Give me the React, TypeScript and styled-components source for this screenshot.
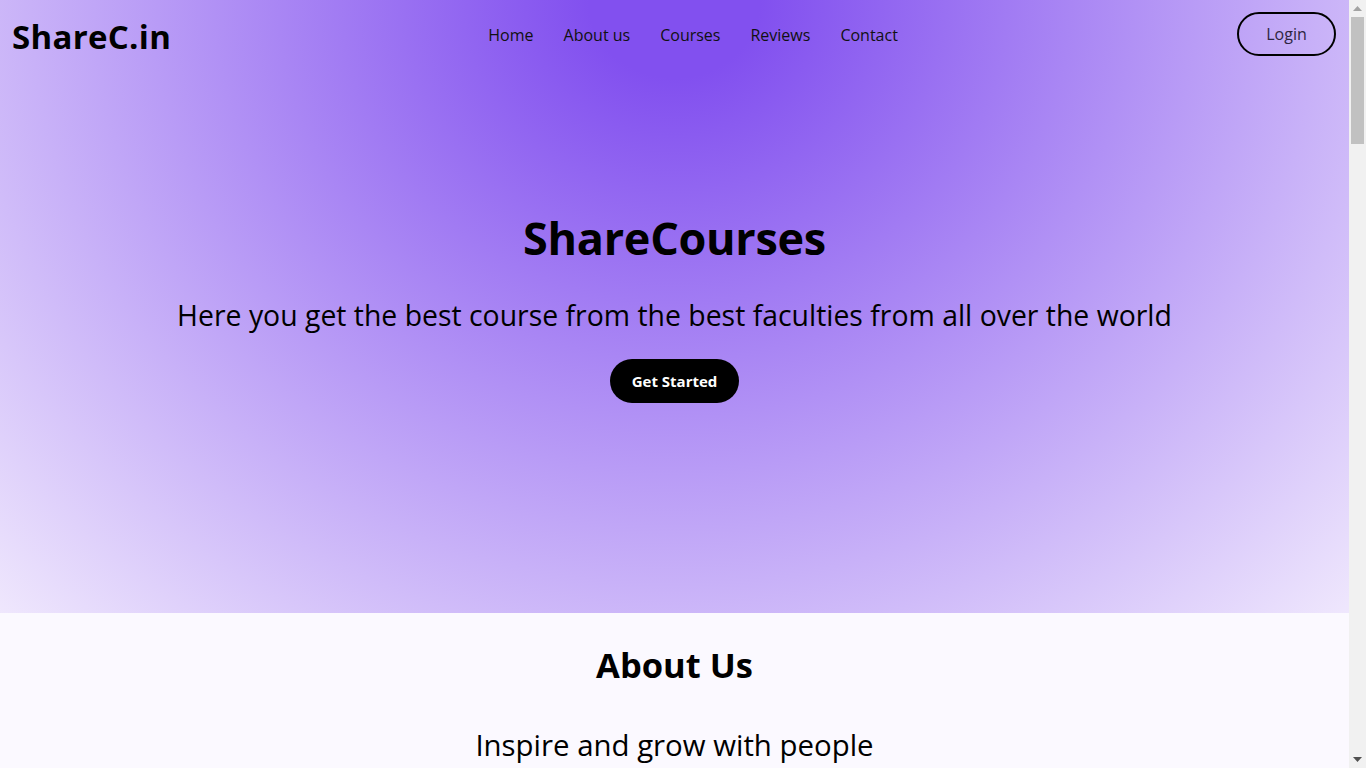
import React from "react";
import styled, { createGlobalStyle } from "styled-components";

const GlobalStyle = createGlobalStyle`
  * { box-sizing: border-box; }
  html, body { margin: 0; padding: 0; }
  html::-webkit-scrollbar { display: none; }
  body {
    font-family: "Segoe UI", "Open Sans", "Noto Sans", sans-serif;
    color: #000;
    background: #fbf9ff;
    padding-right: 17px;
  }
`;

/* Fake classic scrollbar, fixed over the right edge */
const ScrollTrack = styled.div`
  position: fixed;
  top: 0;
  right: 0;
  width: 17px;
  height: 100vh;
  background: #f1f1f1;
  display: flex;
  flex-direction: column;
  z-index: 10;
`;

const ScrollButton = styled.div`
  height: 17px;
  display: flex;
  align-items: center;
  justify-content: center;
`;

const ScrollThumbArea = styled.div`
  flex: 1;
  padding: 0 2px;
`;

const ScrollThumb = styled.div`
  height: 127px;
  background: #c1c1c1;
`;

const Hero = styled.header`
  height: 613px;
  display: flex;
  flex-direction: column;
  background: radial-gradient(ellipse at top, #8250ef 9%, #efe7fd 100%);
`;

const NavBar = styled.nav`
  height: 70px;
  padding: 0 13px 0 12px;
  display: flex;
  align-items: center;
  justify-content: space-between;
`;

const Logo = styled.div`
  font-size: 33px;
  font-weight: 700;
  letter-spacing: 0.3px;
  line-height: 1;
  margin-top: 2px;
`;

const Links = styled.ul`
  list-style: none;
  margin: 0 22px 0 0;
  padding: 0;
  display: flex;
  gap: 30px;
`;

const LinkItem = styled.li`
  font-size: 16px;
  color: #111;
  cursor: pointer;
`;

const LoginButton = styled.button`
  width: 99px;
  height: 44px;
  border: 2px solid #000;
  border-radius: 22px;
  background: transparent;
  font-family: inherit;
  font-size: 16px;
  color: #2e2540;
  margin-top: -2px;
  cursor: pointer;
`;

const HeroBody = styled.div`
  flex: 1;
  display: flex;
  flex-direction: column;
  align-items: center;
  padding-top: 136px;
`;

const Title = styled.h1`
  margin: 0;
  font-size: 45px;
  font-weight: 700;
  line-height: 64px;
  letter-spacing: -0.3px;
`;

const Subtitle = styled.p`
  margin: 25px 0 0;
  font-size: 28.4px;
  font-weight: 400;
  line-height: 40px;
`;

const StartButton = styled.button`
  margin-top: 24px;
  width: 129px;
  height: 44px;
  border: none;
  border-radius: 22px;
  background: #000;
  color: #fff;
  font-family: inherit;
  font-size: 15px;
  font-weight: 700;
  cursor: pointer;
`;

const Section = styled.section`
  display: flex;
  flex-direction: column;
  align-items: center;
  padding: 28px 40px 60px;
  background: #fbf9ff;
`;

const SectionTitle = styled.h2`
  margin: 0;
  font-size: 34.5px;
  font-weight: 700;
  line-height: 48px;
`;

const SectionLead = styled.h3`
  margin: 36px 0 0;
  font-size: 29.4px;
  font-weight: 400;
  line-height: 40px;
`;

const Paragraph = styled.p`
  max-width: 900px;
  margin: 24px 0 0;
  font-size: 18px;
  line-height: 1.7;
  text-align: center;
  color: #222;
`;

const CardGrid = styled.div`
  margin-top: 40px;
  display: grid;
  grid-template-columns: repeat(3, 320px);
  gap: 32px;
`;

const Card = styled.div`
  height: 360px;
  border-radius: 16px;
  background: #fff;
  box-shadow: 0 4px 18px rgba(110, 70, 220, 0.15);
  padding: 24px;
  display: flex;
  flex-direction: column;
  gap: 12px;
`;

const CardTitle = styled.h4`
  margin: 0;
  font-size: 22px;
`;

const CardText = styled.p`
  margin: 0;
  font-size: 16px;
  line-height: 1.6;
  color: #333;
`;

const Footer = styled.footer`
  height: 300px;
  background: #1b1230;
  color: #fff;
  display: flex;
  align-items: center;
  justify-content: center;
  font-size: 16px;
`;

const courses = [
  { t: "Web Development", d: "Learn HTML, CSS, JavaScript and React from industry experts." },
  { t: "Data Science", d: "Master Python, statistics and machine learning step by step." },
  { t: "UI/UX Design", d: "Design beautiful and usable interfaces with modern tools." },
  { t: "Mobile Apps", d: "Build Android and iOS applications with cross-platform tools." },
  { t: "Cloud Computing", d: "Deploy and scale applications on modern cloud platforms." },
  { t: "Cyber Security", d: "Protect systems and networks with security best practices." },
];

const reviews = [
  { t: "Amit", d: "The courses are well structured and easy to follow." },
  { t: "Sara", d: "Great faculties and amazing learning experience." },
  { t: "John", d: "I landed my first job after finishing the course." },
];

const Arrow = ({ up, color }: { up?: boolean; color: string }) => (
  <svg width="9" height="5" viewBox="0 0 9 5">
    <path d={up ? "M0 5 L4.5 0 L9 5 Z" : "M0 0 L4.5 5 L9 0 Z"} fill={color} />
  </svg>
);

export default function App() {
  return (
    <>
      <GlobalStyle />
      <ScrollTrack>
        <ScrollButton>
          <Arrow up color="#a3a3a3" />
        </ScrollButton>
        <ScrollThumbArea>
          <ScrollThumb />
        </ScrollThumbArea>
        <ScrollButton>
          <Arrow color="#505050" />
        </ScrollButton>
      </ScrollTrack>
      <Hero>
        <NavBar>
          <Logo>ShareC.in</Logo>
          <Links>
            <LinkItem>Home</LinkItem>
            <LinkItem>About us</LinkItem>
            <LinkItem>Courses</LinkItem>
            <LinkItem>Reviews</LinkItem>
            <LinkItem>Contact</LinkItem>
          </Links>
          <LoginButton>Login</LoginButton>
        </NavBar>
        <HeroBody>
          <Title>ShareCourses</Title>
          <Subtitle>Here you get the best course from the best faculties from all over the world</Subtitle>
          <StartButton>Get Started</StartButton>
        </HeroBody>
      </Hero>
      <Section>
        <SectionTitle>About Us</SectionTitle>
        <SectionLead>Inspire and grow with people</SectionLead>
        <Paragraph>
          ShareCourses brings together learners and teachers from every corner of the world.
          Our mission is to make quality education accessible, affordable and inspiring for everyone.
        </Paragraph>
      </Section>
      <Section>
        <SectionTitle>Courses</SectionTitle>
        <CardGrid>
          {courses.map((c) => (
            <Card key={c.t}>
              <CardTitle>{c.t}</CardTitle>
              <CardText>{c.d}</CardText>
            </Card>
          ))}
        </CardGrid>
      </Section>
      <Section>
        <SectionTitle>Reviews</SectionTitle>
        <CardGrid>
          {reviews.map((r) => (
            <Card key={r.t}>
              <CardTitle>{r.t}</CardTitle>
              <CardText>{r.d}</CardText>
            </Card>
          ))}
        </CardGrid>
      </Section>
      <Section>
        <SectionTitle>Contact</SectionTitle>
        <Paragraph>Email us at support@sharec.in</Paragraph>
        <CardGrid>
          <Card><CardTitle>Address</CardTitle><CardText>New Delhi, India</CardText></Card>
          <Card><CardTitle>Phone</CardTitle><CardText>+91 98765 43210</CardText></Card>
          <Card><CardTitle>Email</CardTitle><CardText>support@sharec.in</CardText></Card>
        </CardGrid>
      </Section>
      <Footer>© 2024 ShareC.in. All rights reserved.</Footer>
    </>
  );
}
